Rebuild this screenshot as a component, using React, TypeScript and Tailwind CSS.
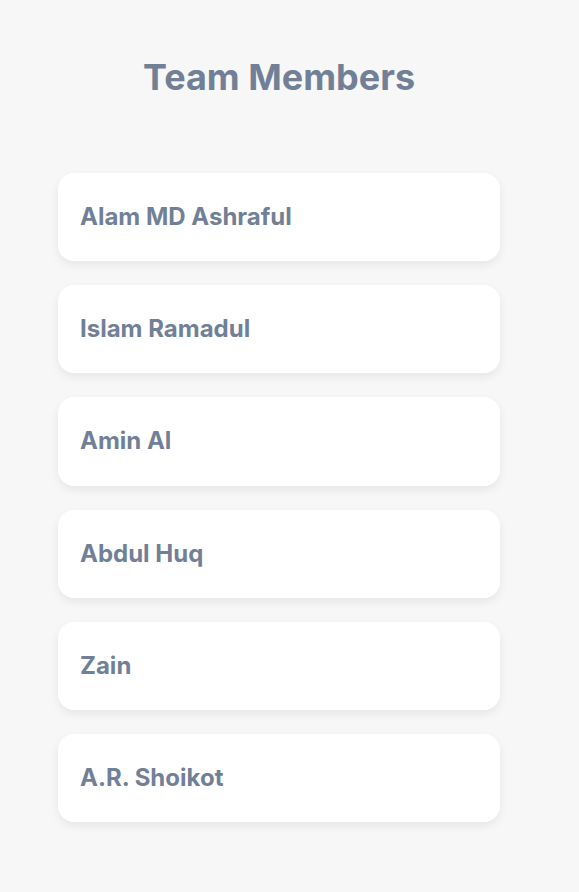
import React from "react";

const members = ["Alam MD Ashraful", "Islam Ramadul", "Amin Al", "Abdul Huq", "Zain", "A.R. Shoikot"];

export default function App() {
  return (
    <div className="min-h-[892px] bg-[#f7f7f7] pt-[52px]" style={{ fontFamily: "Inter, 'Noto Sans', sans-serif" }}>
      <div className="ml-[58px] w-[442px]">
        <h1 className="text-center text-[36px] leading-[50px] font-bold text-[#718096]">Team Members</h1>
        <div className="mt-[71px] flex flex-col gap-[24px]">
          {members.map((m) => (
            <div key={m} className="flex h-[88.2px] items-center rounded-[16px] bg-white px-[22px] shadow-[0_4px_10px_rgba(0,0,0,0.07)]">
              <span className="text-[24px] font-bold text-[#718096]">{m}</span>
            </div>
          ))}
        </div>
      </div>
    </div>
  );
}
